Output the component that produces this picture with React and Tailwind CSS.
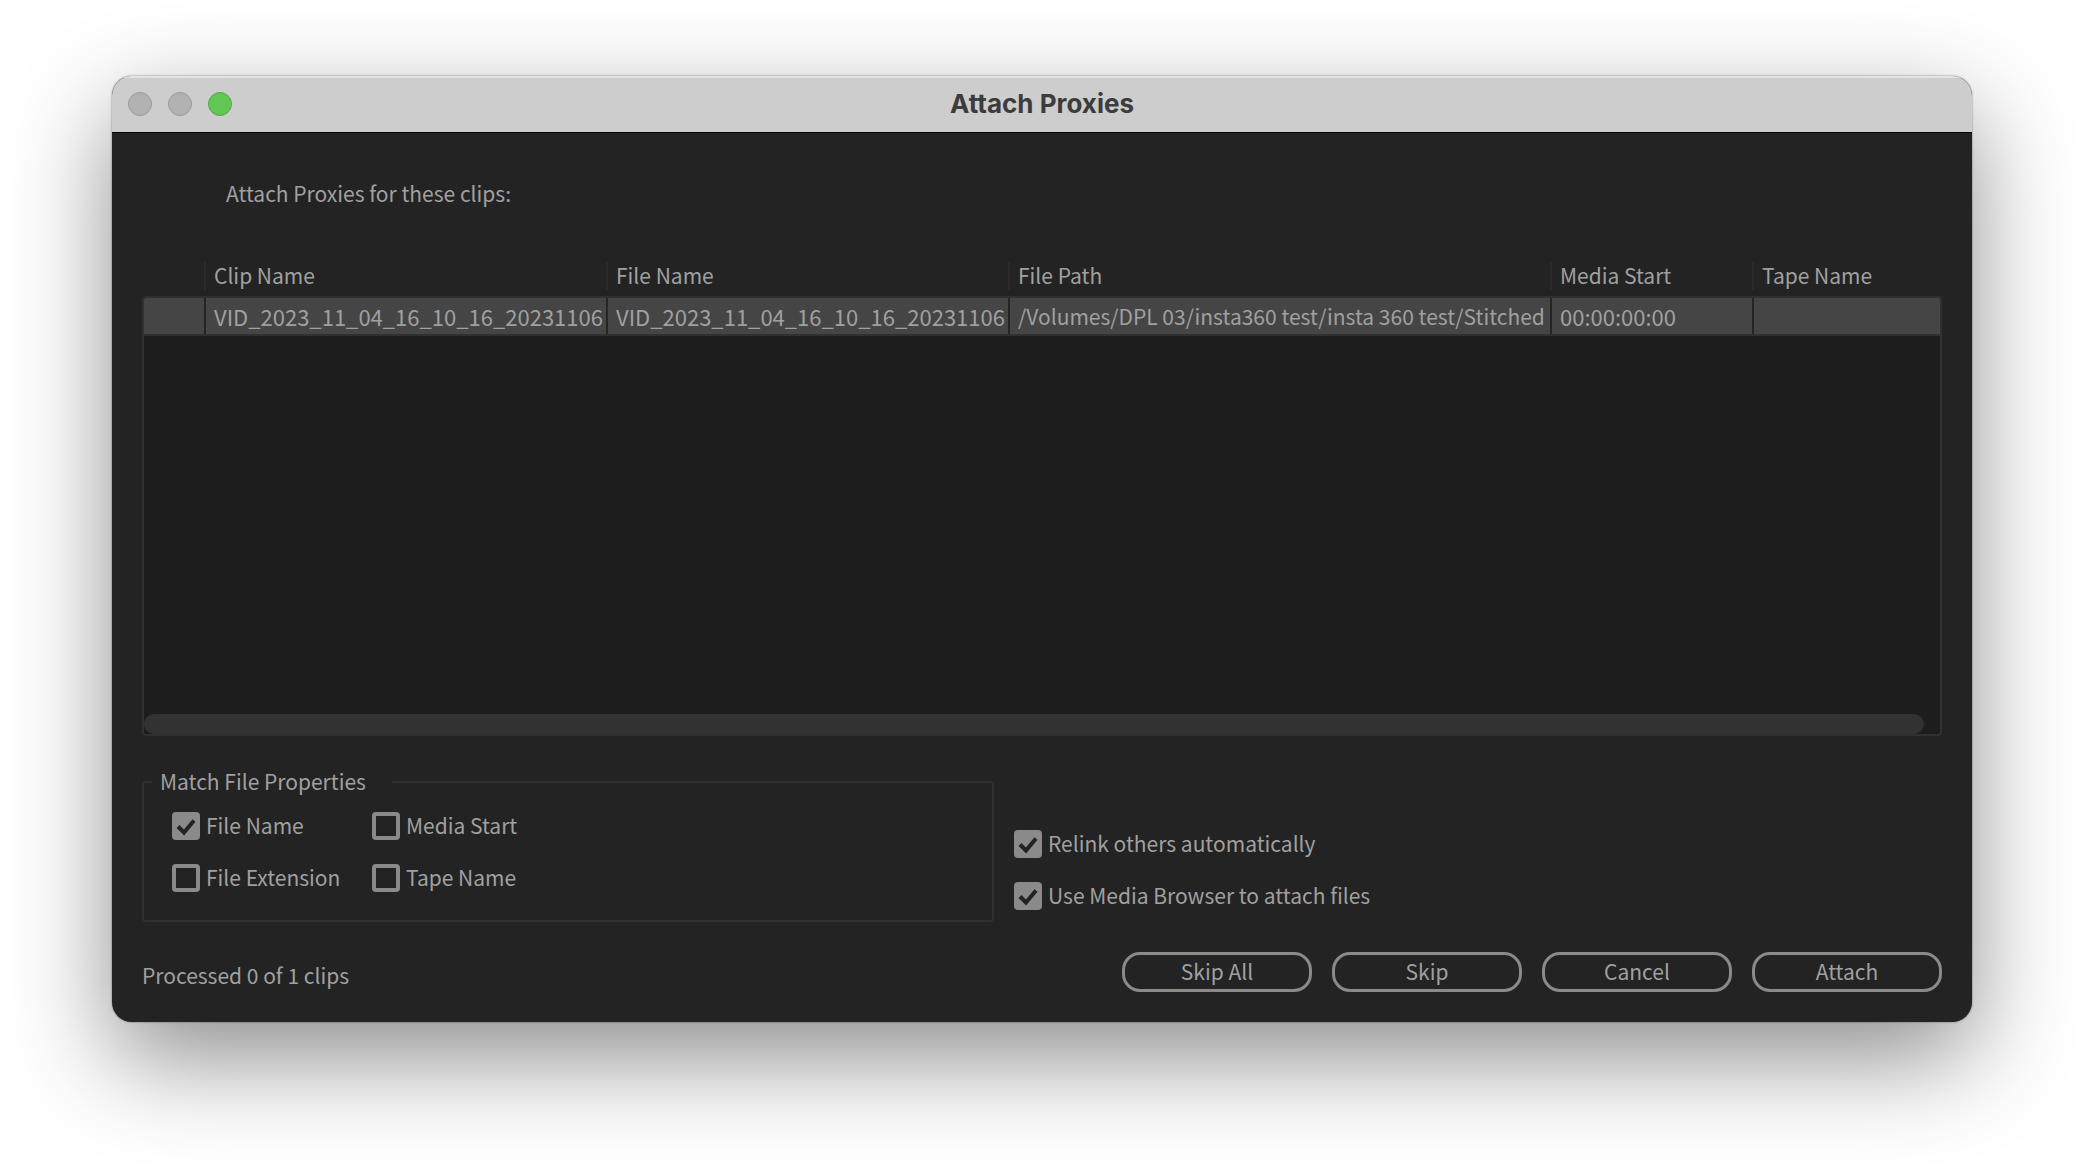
import React from 'react';

const columns = [
  { title: '', width: 'w-[62px]', value: '', size: 'text-[22px]' },
  { title: 'Clip Name', width: 'w-[402px]', value: 'VID_2023_11_04_16_10_16_20231106', size: 'text-[22px]' },
  { title: 'File Name', width: 'w-[402px]', value: 'VID_2023_11_04_16_10_16_20231106', size: 'text-[22px]' },
  {
    title: 'File Path',
    width: 'w-[542px]',
    value: '/Volumes/DPL 03/insta360 test/insta 360 test/Stitched',
    size: 'text-[21px]',
  },
  { title: 'Media Start', width: 'w-[202px]', value: '00:00:00:00', size: 'text-[22px]' },
  { title: 'Tape Name', width: '', value: '', size: 'text-[22px]' },
];

const buttons = ['Skip All', 'Skip', 'Cancel', 'Attach'];

const Checkbox = ({ id, label, checked = false }) => (
  <div className="flex h-7 items-start gap-[6px]">
    <span className="relative flex h-7 w-7 shrink-0">
      <input
        id={id}
        type="checkbox"
        defaultChecked={checked}
        className="peer h-7 w-7 appearance-none rounded-[4px] border-4 border-[#8a8a8a] checked:bg-[#8a8a8a]"
      />
      <svg
        viewBox="0 0 28 28"
        className="pointer-events-none absolute inset-0 hidden h-7 w-7 peer-checked:block"
        aria-hidden="true"
      >
        <path d="M6 14.5 L12 20.5 L22 8.5" fill="none" stroke="#232323" strokeWidth="4" />
      </svg>
    </span>
    <label htmlFor={id} className="leading-[26px] whitespace-nowrap">
      {label}
    </label>
  </div>
);

const TitleBar = () => (
  <header className="grid h-14 grid-cols-[1fr_auto_1fr] items-center border-t-2 border-[#e4e4e4] bg-[#cdcdcd] px-4 pb-[2px]">
    <div className="flex gap-4">
      <button type="button" aria-label="Close" className="h-6 w-6 rounded-full border border-[#999999] bg-[#b2b2b2]" />
      <button type="button" aria-label="Minimize" className="h-6 w-6 rounded-full border border-[#999999] bg-[#b2b2b2]" />
      <button type="button" aria-label="Zoom" className="h-6 w-6 rounded-full border border-[#4fab41] bg-[#62c655]" />
    </div>
    <h1 className="font-['Inter',sans-serif] text-[26px] leading-8 font-bold text-[#3c3c3c]">Attach Proxies</h1>
  </header>
);

const ClipTable = () => (
  <div className="flex h-[474px] flex-col">
    <table className="w-full table-fixed border-separate border-spacing-0 text-left">
      <thead>
        <tr>
          {columns.map((col, i) => (
            <th key={i} className={`${col.width} p-0 pb-[6px] font-normal`}>
              <div className={`h-7 leading-[26px] ${i > 0 ? 'border-l-2 border-[#2b2b2b] pl-2' : ''}`}>{col.title}</div>
            </th>
          ))}
        </tr>
      </thead>
      <tbody>
        <tr>
          {columns.map((col, i) => (
            <td
              key={i}
              className="border-y-2 border-[#303030] bg-[#454545] p-0 first:rounded-tl-[4px] first:border-l-2 last:rounded-tr-[4px] last:border-r-2"
            >
              <div
                className={`h-9 overflow-hidden leading-9 whitespace-nowrap ${col.size} ${i > 0 ? 'border-l-2 border-[#252525] pl-2' : ''}`}
              >
                {col.value}
              </div>
            </td>
          ))}
        </tr>
      </tbody>
    </table>
    <div className="flex flex-1 items-end rounded-b-[4px] border-2 border-t-0 border-[#303030] bg-[#1d1d1d] pr-[16px]">
      {/* Horizontal scrollbar */}
      <div className="h-5 w-full rounded-full bg-[#323232]" />
    </div>
  </div>
);

const MatchProperties = () => (
  <fieldset className="h-[154px] w-[852px] rounded-[4px] border-2 border-[#303030] px-[28px] pt-4">
    <legend className="-ml-5 h-7 w-[240px] pl-2 leading-[26px]">Match File Properties</legend>
    <div className="grid grid-cols-[200px_200px] gap-y-6">
      <Checkbox id="match-file-name" label="File Name" checked />
      <Checkbox id="match-media-start" label="Media Start" />
      <Checkbox id="match-file-extension" label="File Extension" />
      <Checkbox id="match-tape-name" label="Tape Name" />
    </div>
  </fieldset>
);

const App = () => {
  return (
    <div className="min-h-screen bg-white px-28 pt-[76px] pb-[147px] font-['Noto_Sans_CJK_SC',sans-serif] text-[21px] text-[#a0a0a0]">
      <div className="overflow-hidden rounded-[20px] bg-[#232323] shadow-[0_0_2px_rgba(0,0,0,0.5),0_36px_100px_rgba(0,0,0,0.45)]">
        <TitleBar />
        <main className="border-t border-black px-[30px] pt-[46px] pb-[30px]">
          <p className="mb-[55px] pl-[84px] leading-7">Attach Proxies for these clips:</p>
          <ClipTable />
          <div className="mt-8 flex gap-5">
            <MatchProperties />
            <div className="flex flex-col gap-6 pt-[62px]">
              <Checkbox id="relink-others" label="Relink others automatically" checked />
              <Checkbox id="use-media-browser" label="Use Media Browser to attach files" checked />
            </div>
          </div>
          <footer className="mt-[30px] flex items-center justify-between">
            <p className="pt-[6px] leading-7">Processed 0 of 1 clips</p>
            <div className="flex gap-5">
              {buttons.map((label) => (
                <button
                  key={label}
                  type="button"
                  className="flex h-10 w-[190px] items-center justify-center rounded-[18px] border-[3px] border-[#8a8a8a]"
                >
                  {label}
                </button>
              ))}
            </div>
          </footer>
        </main>
      </div>
    </div>
  );
};

export default App;
